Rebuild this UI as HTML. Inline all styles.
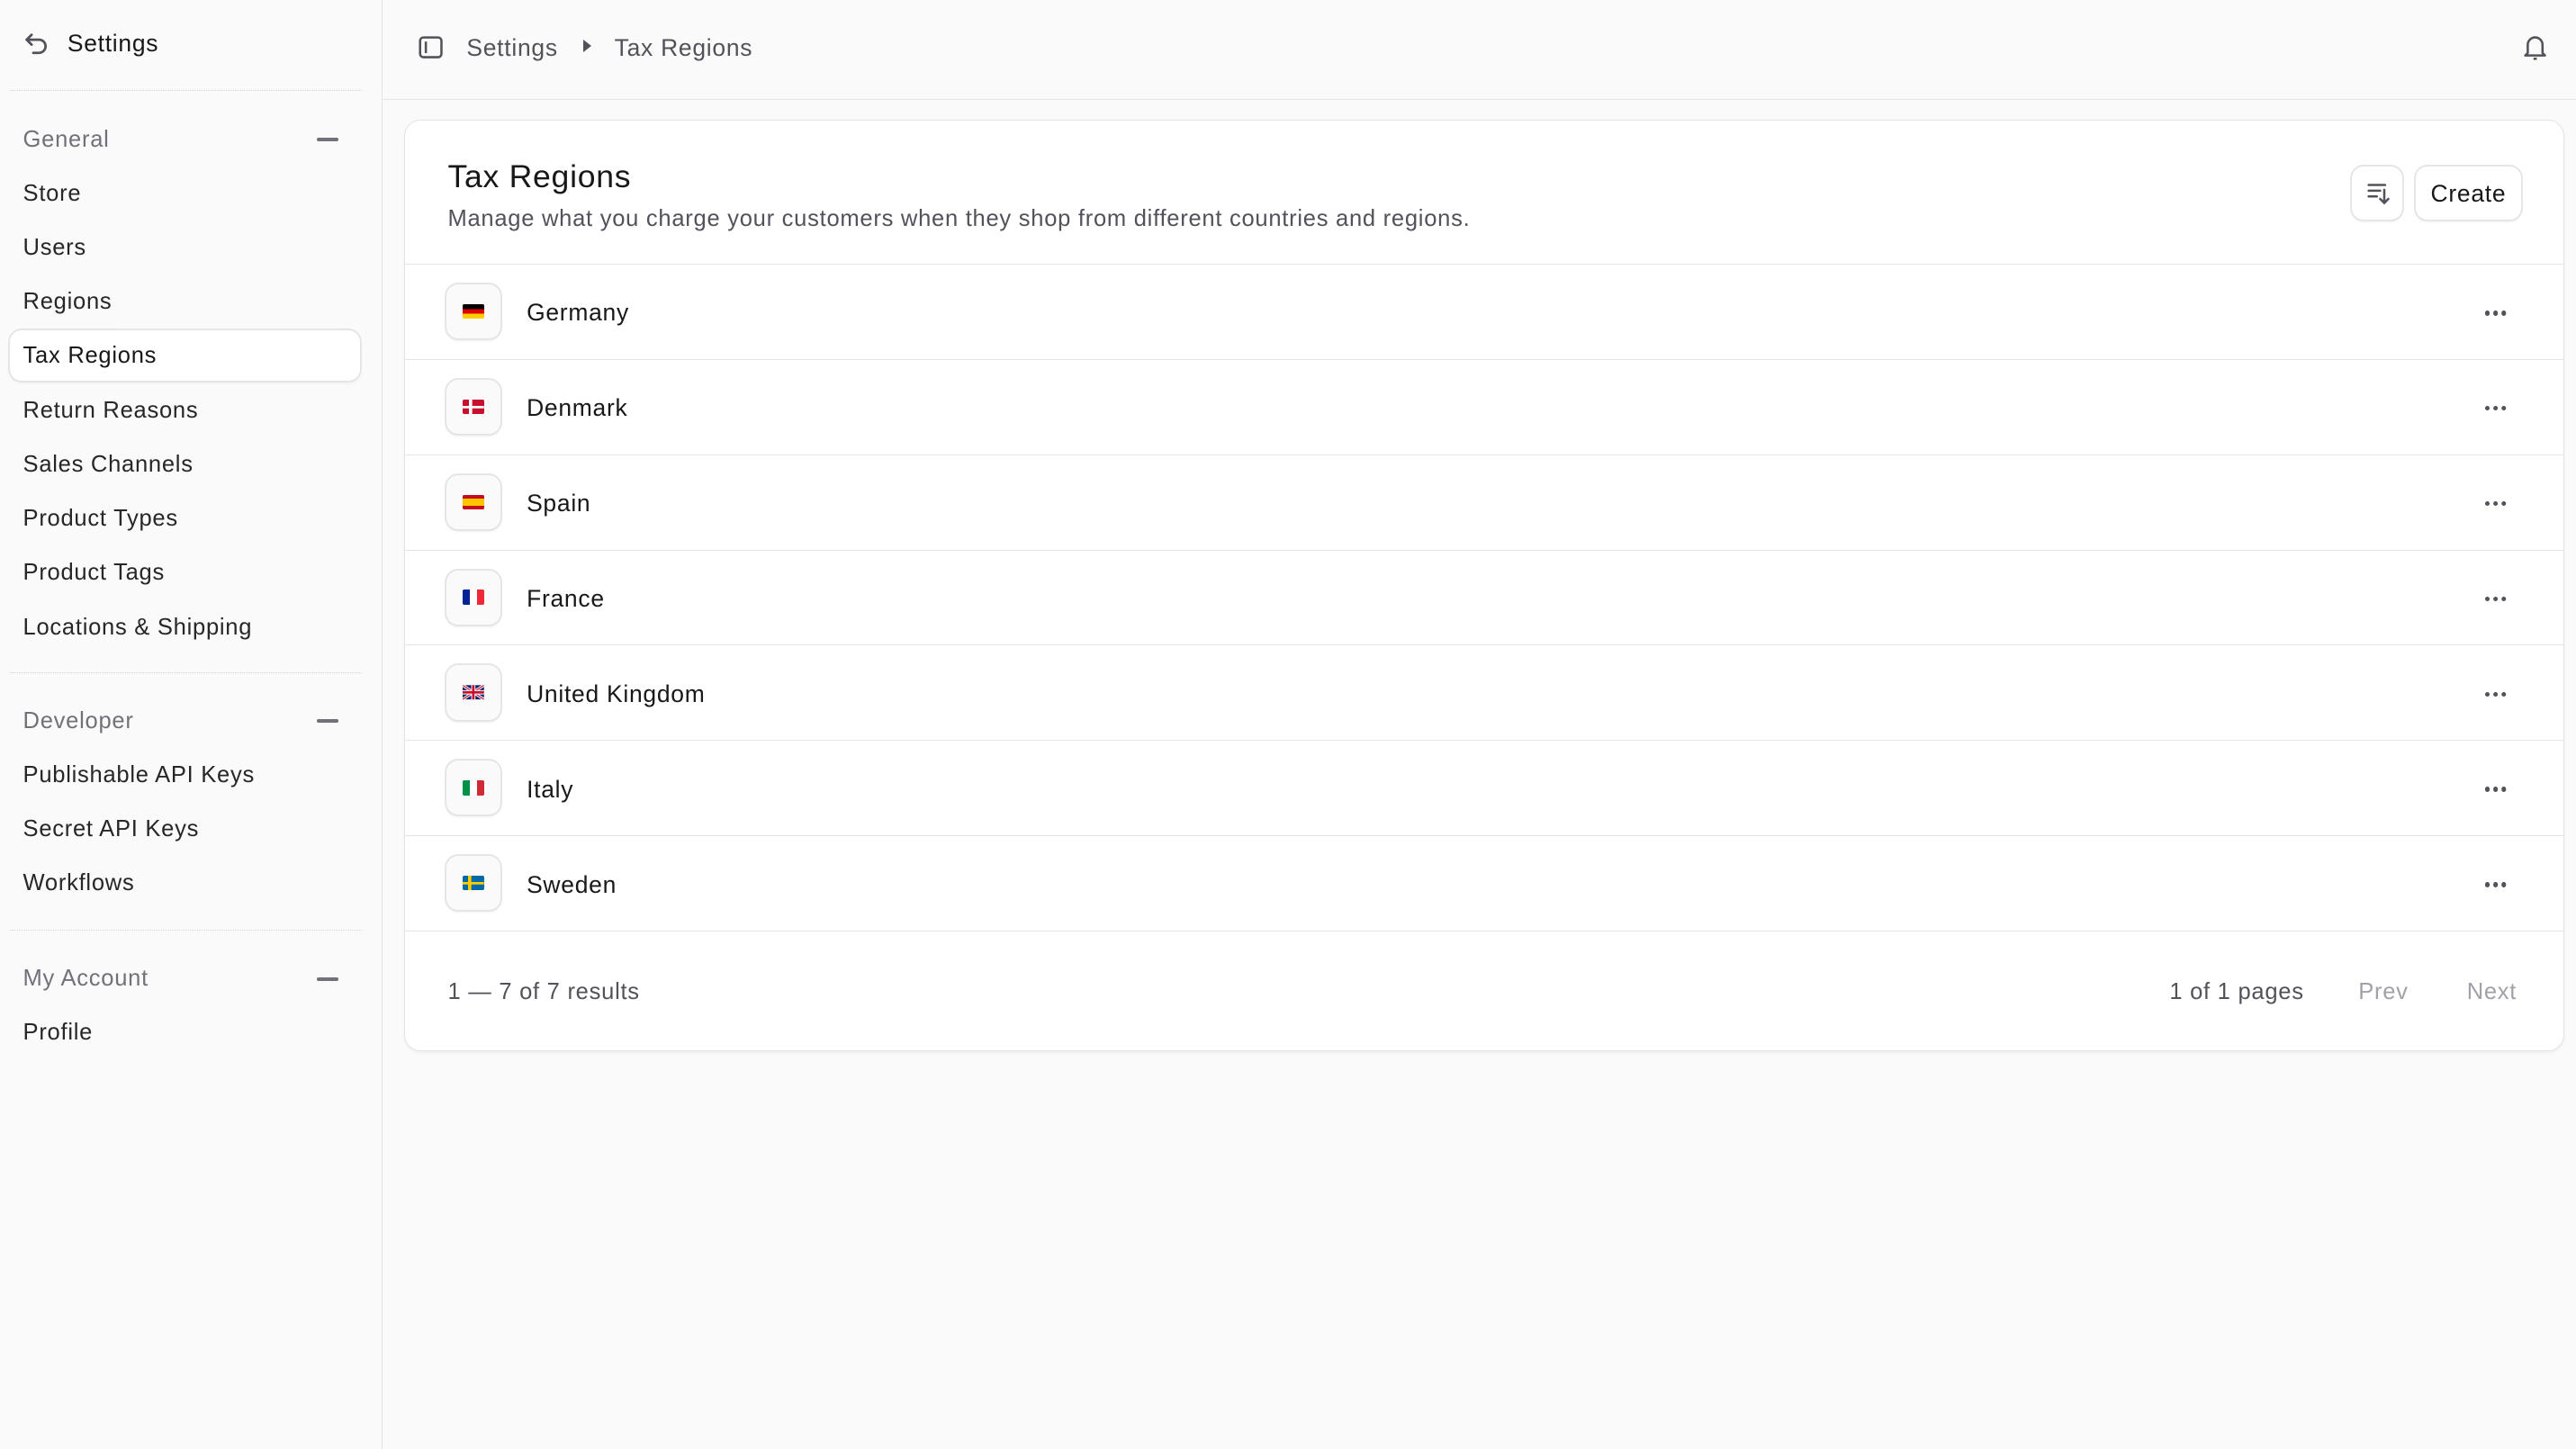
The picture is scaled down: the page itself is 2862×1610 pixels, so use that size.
<!DOCTYPE html>
<html><head><meta charset="utf-8"><style>
*{box-sizing:border-box;margin:0;padding:0}
html,body{width:2862px;height:1610px;overflow:hidden;background:#fafafa}
#root{zoom:1.82525;width:1568px;height:882px;position:relative;font-family:"Liberation Sans",sans-serif;color:#18181b;font-size:14px;letter-spacing:0.4px}
.side{position:absolute;left:0;top:0;width:233px;height:882px;border-right:1px solid #e4e4e7;background:#fafafa}
.si{position:absolute;left:14px;font-size:14px;color:#27272a}
.sh{position:absolute;left:14px;font-size:14px;color:#71717a}
.minus{position:absolute;left:193px;width:13px;height:2px;background:#71717a;border-radius:1px}
.dot{position:absolute;left:6px;width:214px;border-top:1px dotted #d4d4d8}
.top{position:absolute;left:233px;top:0;right:0;height:61px;border-bottom:1px solid #e4e4e7}
.card{position:absolute;left:246px;top:73px;width:1315px;height:567px;background:#fff;border:1px solid #e4e4e7;border-radius:10px;box-shadow:0 1px 2px rgba(0,0,0,.05)}
.row{position:absolute;left:0;right:0;height:58px;border-top:1px solid #e4e4e7}
.fb{position:absolute;left:25px;top:12px;width:33px;height:33px;border-radius:7px;background:#fafafa;box-shadow:0 0 0 1px #e4e4e7,0 1px 2px rgba(0,0,0,.1)}
.fl{position:absolute;left:10px;top:12px;width:13px;height:9px;border-radius:1px;overflow:hidden}
.rn{position:absolute;left:74px;top:21px;font-size:14.5px}
.more{position:absolute;right:45px;top:28px;width:3px;height:3px;border-radius:50%;background:#52525b;box-shadow:5px 0 #52525b,10px 0 #52525b}
.btn{position:absolute;top:28px;height:32px;border-radius:7px;background:#fff;box-shadow:0 0 0 1px #e4e4e7,0 1px 2px rgba(0,0,0,.1)}
</style></head><body><div id="root">
<div class="side">
<svg style="position:absolute;left:14px;top:19px" width="16" height="16" viewBox="0 0 16 16" fill="none" stroke="#52525b" stroke-width="1.5" stroke-linecap="round" stroke-linejoin="round"><path d="M5 2L2 5l3 3"/><path d="M2 5h7.5a4 4 0 010 8H6"/></svg>
<div class="si" style="left:41px;top:18px;color:#18181b;font-size:14.5px">Settings</div>
<div class="dot" style="top:55px"></div>
<div class="sh" style="top:77px">General</div><div class="minus" style="top:84px"></div>
<div class="si" style="top:110px">Store</div>
<div class="si" style="top:143px">Users</div>
<div class="si" style="top:176px">Regions</div>
<div style="position:absolute;left:6px;top:201px;width:213px;height:31px;background:#fff;border-radius:7px;box-shadow:0 0 0 1px #e4e4e7,0 1px 2px rgba(0,0,0,.08)"></div>
<div class="si" style="top:209px;color:#18181b">Tax Regions</div>
<div class="si" style="top:242px">Return Reasons</div>
<div class="si" style="top:275px">Sales Channels</div>
<div class="si" style="top:308px">Product Types</div>
<div class="si" style="top:341px">Product Tags</div>
<div class="si" style="top:374px">Locations &amp; Shipping</div>
<div class="dot" style="top:409px"></div>
<div class="sh" style="top:431px">Developer</div><div class="minus" style="top:438px"></div>
<div class="si" style="top:464px">Publishable API Keys</div>
<div class="si" style="top:497px">Secret API Keys</div>
<div class="si" style="top:530px">Workflows</div>
<div class="dot" style="top:566px"></div>
<div class="sh" style="top:588px">My Account</div><div class="minus" style="top:595px"></div>
<div class="si" style="top:621px">Profile</div>
</div>
<div class="top">
<svg style="position:absolute;left:21px;top:21px" width="16" height="16" viewBox="0 0 16 16" fill="none" stroke="#52525b" stroke-width="1.4"><rect x="1.5" y="2" width="13" height="12" rx="2"/><path d="M5 4.5v7"/></svg>
<div style="position:absolute;left:51px;top:21px;color:#52525b;font-size:14.5px">Settings</div>
<div style="position:absolute;left:122px;top:24px;width:0;height:0;border-left:5px solid #52525b;border-top:4px solid transparent;border-bottom:4px solid transparent"></div>
<div style="position:absolute;left:141px;top:21px;color:#52525b;font-size:14.5px">Tax Regions</div>
<svg style="position:absolute;right:17px;top:20px" width="16" height="17" viewBox="0 0 16 17" fill="none" stroke="#52525b" stroke-width="1.4" stroke-linejoin="round"><path d="M3.5 12V7a4.5 4.5 0 019 0v5l1.5 1.5H2z"/><path d="M7 15.5h2"/></svg>
</div>
<div class="card">
<div style="position:absolute;left:26px;top:23px;font-size:19.5px">Tax Regions</div>
<div style="position:absolute;left:26px;top:52px;font-size:14px;color:#52525b">Manage what you charge your customers when they shop from different countries and regions.</div>
<div class="btn" style="left:1185px;width:31px"><svg style="position:absolute;left:8px;top:8px" width="16" height="16" viewBox="0 0 16 16" fill="none" stroke="#52525b" stroke-width="1.4" stroke-linecap="round"><path d="M2 3h10M2 6.5h7M2 10h5M11.5 6v8M9 11.5l2.5 2.5 2.5-2.5"/></svg></div>
<div class="btn" style="left:1224px;width:64px"><span style="position:absolute;left:9px;top:8px;font-size:14.5px">Create</span></div>
<div class="row" style="top:87px"><div class="fb"><div class="fl" style="background:linear-gradient(#000 33%,#dd0000 33% 66%,#ffce00 66%)"></div></div><div class="rn">Germany</div><div class="more"></div></div>
<div class="row" style="top:145px"><div class="fb"><div class="fl" style="background:linear-gradient(#fff,#fff) 4px 0/2px 9px no-repeat,linear-gradient(#fff,#fff) 0 4px/13px 1.5px no-repeat,#c8102e"></div></div><div class="rn">Denmark</div><div class="more"></div></div>
<div class="row" style="top:203px"><div class="fb"><div class="fl" style="background:linear-gradient(#c60b1e 25%,#ffc400 25% 75%,#c60b1e 75%)"></div></div><div class="rn">Spain</div><div class="more"></div></div>
<div class="row" style="top:261px"><div class="fb"><div class="fl" style="background:linear-gradient(90deg,#002395 33%,#fff 33% 66%,#ed2939 66%)"></div></div><div class="rn">France</div><div class="more"></div></div>
<div class="row" style="top:319px"><div class="fb"><svg class="fl" viewBox="0 0 60 40" style="width:13px;height:9px"><rect width="60" height="40" fill="#012169"/><path d="M0 0L60 40M60 0L0 40" stroke="#fff" stroke-width="8"/><path d="M0 0L60 40M60 0L0 40" stroke="#c8102e" stroke-width="3"/><path d="M30 0v40M0 20h60" stroke="#fff" stroke-width="12"/><path d="M30 0v40M0 20h60" stroke="#c8102e" stroke-width="7"/></svg></div><div class="rn">United Kingdom</div><div class="more"></div></div>
<div class="row" style="top:377px"><div class="fb"><div class="fl" style="background:linear-gradient(90deg,#009246 33%,#fff 33% 66%,#ce2b37 66%)"></div></div><div class="rn">Italy</div><div class="more"></div></div>
<div class="row" style="top:435px"><div class="fb"><div class="fl" style="background:linear-gradient(#fecc00,#fecc00) 3.5px 0/2px 9px no-repeat,linear-gradient(#fecc00,#fecc00) 0 3.75px/13px 1.5px no-repeat,#006aa7"></div></div><div class="rn">Sweden</div><div class="more"></div></div>
<div class="row" style="top:493px;height:73px"><div style="position:absolute;left:26px;top:29px;color:#52525b">1 — 7 of 7 results</div>
<div style="position:absolute;left:1074px;top:29px;color:#52525b">1 of 1 pages</div>
<div style="position:absolute;left:1189px;top:29px;color:#a1a1aa">Prev</div>
<div style="position:absolute;left:1255px;top:29px;color:#a1a1aa">Next</div></div>
</div>
</div></body></html>
